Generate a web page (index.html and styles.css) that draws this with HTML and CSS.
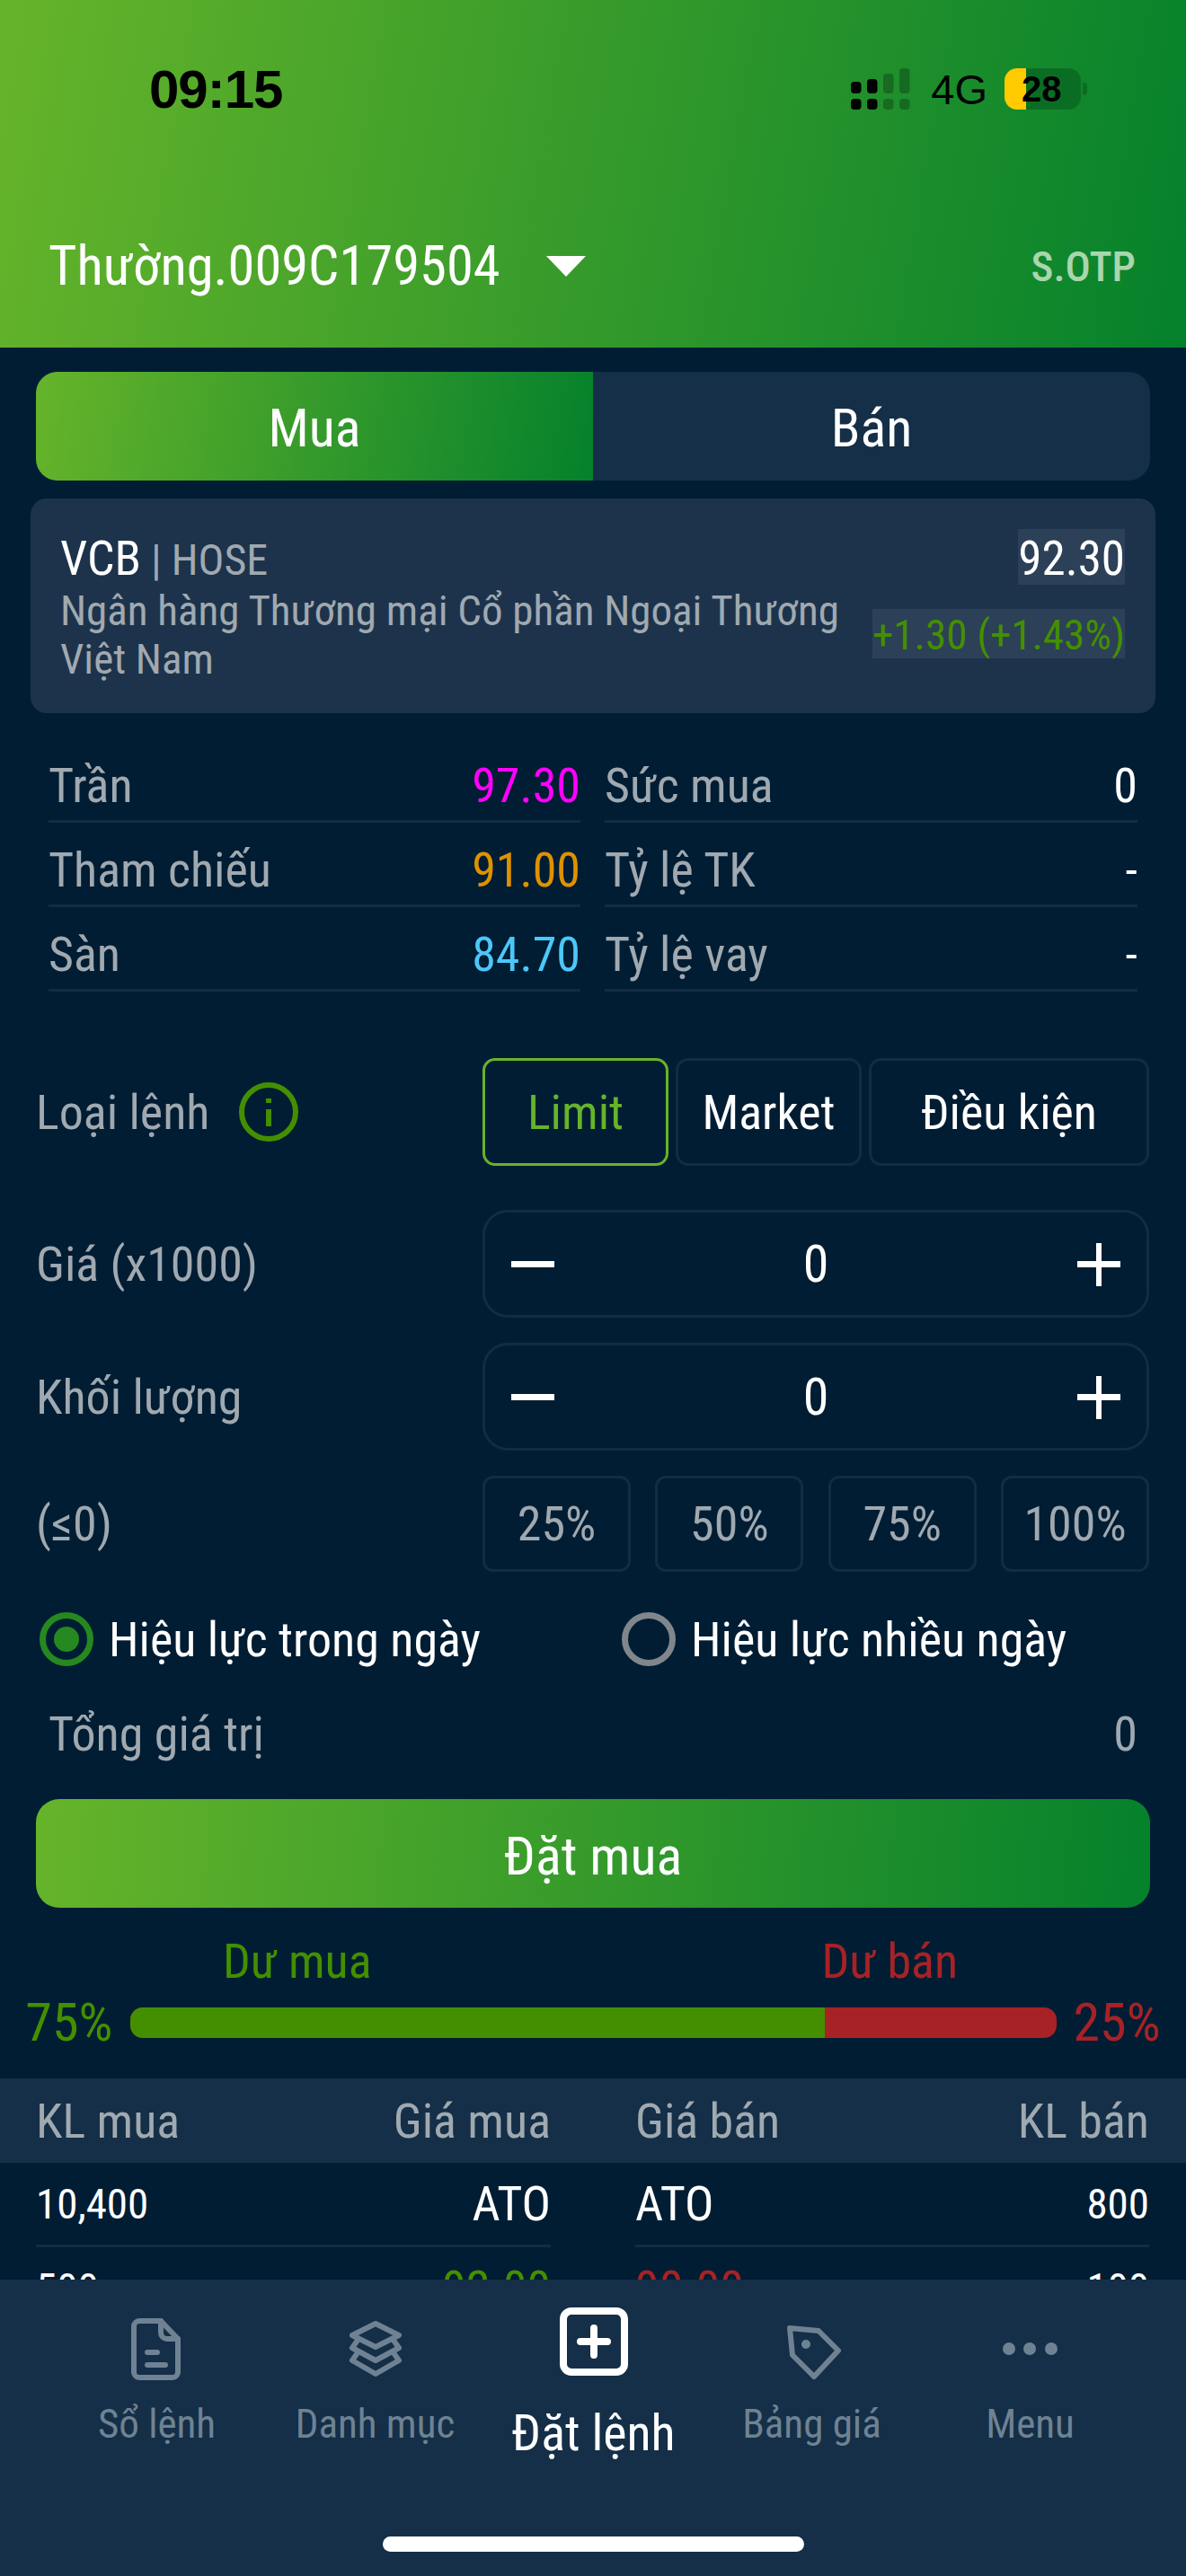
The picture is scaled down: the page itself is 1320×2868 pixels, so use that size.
FILE: index.html
```html
<!DOCTYPE html>
<html lang="vi">
  <head>
    <meta charset="UTF-8" />
    <meta name="viewport" content="width=device-width, initial-scale=1.0" />
    <title>Đặt lệnh</title>
    <link rel="stylesheet" href="styles.css">
  </head>
  <body>
    <header class="top">
      <div class="status">
        <span class="time">09:15</span>
        <div class="status-right">
          <svg class="signal" width="66" height="46" viewBox="0 0 66 46">
            <rect x="0" y="15" width="11.5" height="13" rx="4" />
            <rect x="18" y="12" width="11.5" height="16" rx="4" />
            <rect x="36" y="6" width="11.5" height="22" rx="4" opacity=".25" />
            <rect x="54" y="0" width="11.5" height="28" rx="4" opacity=".25" />
            <rect x="0" y="34" width="11.5" height="12" rx="4" />
            <rect x="18" y="34" width="11.5" height="12" rx="4" />
            <rect x="36" y="34" width="11.5" height="12" rx="4" opacity=".25" />
            <rect x="54" y="34" width="11.5" height="12" rx="4" opacity=".25" />
          </svg>
          <span class="net">4G</span>
          <div class="battery"><span class="battery-level"></span><span class="battery-num">28</span></div>
          <span class="battery-cap"></span>
        </div>
      </div>
      <div class="account">
        <span class="account-name">Thường.009C179504</span>
        <span class="caret"></span>
        <span class="otp">S.OTP</span>
      </div>
    </header>

    <main class="content">
      <div class="tabs">
        <div class="tab tab-on">Mua</div>
        <div class="tab">Bán</div>
      </div>

      <section class="stock">
        <div class="stock-left">
          <p class="stock-code"><b>VCB</b> | HOSE</p>
          <p class="stock-name">Ngân hàng Thương mại Cổ phần Ngoại Thương Việt Nam</p>
        </div>
        <div class="stock-right">
          <span class="stock-price">92.30</span>
          <span class="stock-change">+1.30 (+1.43%)</span>
        </div>
      </section>

      <section class="stats">
        <div class="stat"><span>Trần</span><span class="ceil">97.30</span></div>
        <div class="stat"><span>Sức mua</span><span class="white">0</span></div>
        <div class="stat"><span>Tham chiếu</span><span class="ref">91.00</span></div>
        <div class="stat"><span>Tỷ lệ TK</span><span class="white">-</span></div>
        <div class="stat"><span>Sàn</span><span class="floor">84.70</span></div>
        <div class="stat"><span>Tỷ lệ vay</span><span class="white">-</span></div>
      </section>

      <section class="form">
        <div class="form-row row-type">
          <div class="label">
            <span>Loại lệnh</span>
            <svg class="info" width="68" height="68" viewBox="0 0 68 68">
              <circle cx="34" cy="34" r="30" />
              <line x1="34" y1="31" x2="34" y2="50" />
              <line x1="34" y1="19" x2="34" y2="24" />
            </svg>
          </div>
          <div class="types">
            <div class="type type-on type-a">Limit</div>
            <div class="type type-a">Market</div>
            <div class="type type-b">Điều kiện</div>
          </div>
        </div>
        <div class="form-row row-input">
          <div class="label">Giá (x1000)</div>
          <div class="stepper"><span class="minus"></span><span>0</span><span class="plus"></span></div>
        </div>
        <div class="form-row row-tight">
          <div class="label">Khối lượng</div>
          <div class="stepper"><span class="minus"></span><span>0</span><span class="plus"></span></div>
        </div>
        <div class="form-row row-tight">
          <div class="label">(≤0)</div>
          <div class="percents">
            <div class="percent">25%</div>
            <div class="percent">50%</div>
            <div class="percent">75%</div>
            <div class="percent">100%</div>
          </div>
        </div>
      </section>

      <div class="radios">
        <div class="radio radio-on"><span class="dot"></span>Hiệu lực trong ngày</div>
        <div class="radio"><span class="dot"></span>Hiệu lực nhiều ngày</div>
      </div>

      <div class="total"><span>Tổng giá trị</span><span>0</span></div>

      <div class="submit">Đặt mua</div>

      <section class="balance">
        <div class="balance-labels"><span class="buy">Dư mua</span><span class="sell">Dư bán</span></div>
        <div class="balance-bar">
          <span class="buy">75%</span>
          <div class="bar"><div class="bar-buy" style="width: 75%"></div><div class="bar-sell"></div></div>
          <span class="sell">25%</span>
        </div>
      </section>

      <div class="book-head">
        <div class="book-side"><span>KL mua</span><span>Giá mua</span></div>
        <div class="book-side"><span>Giá bán</span><span>KL bán</span></div>
      </div>
      <div class="book-rows">
        <div class="book-side line"><span class="vol">10,400</span><span>ATO</span></div>
        <div class="book-side line"><span>ATO</span><span class="vol">800</span></div>
        <div class="book-side line"><span class="vol">500</span><span class="buy">92.00</span></div>
        <div class="book-side line"><span class="sell">90.00</span><span class="vol">100</span></div>
      </div>
    </main>

    <nav class="nav">
      <div class="nav-items">
        <div class="nav-item">
          <svg width="60" height="72" viewBox="0 0 60 72">
            <path d="M10 4H34L53 24V61a6 6 0 0 1-6 6H10a6 6 0 0 1-6-6V10a6 6 0 0 1 6-6z" />
            <path d="M34 4V17a7 7 0 0 0 7 7H53" />
            <path d="M19 39H30M19 53H39" />
          </svg>
          <span>Sổ lệnh</span>
        </div>
        <div class="nav-item">
          <svg width="68" height="72" viewBox="0 -2 68 72">
            <path d="M34 5L60 18L34 31L8 18Z" />
            <path d="M13 25L8 32L34 46L60 32L55 25" />
            <path d="M13 39L8 46L34 61L60 46L55 39" />
          </svg>
          <span>Danh mục</span>
        </div>
        <div class="nav-item nav-on">
          <svg width="80" height="80" viewBox="0 0 80 80">
            <rect x="6" y="6" width="68" height="68" rx="9" />
            <path d="M40 25V55M25 40H55" />
          </svg>
          <span>Đặt lệnh</span>
        </div>
        <div class="nav-item">
          <svg width="68" height="72" viewBox="-4 -5 68 72">
            <path d="M5 7L37 10L59 32L32 61L8 37Z" />
            <circle class="fill" cx="23" cy="25" r="5" />
          </svg>
          <span>Bảng giá</span>
        </div>
        <div class="nav-item">
          <svg width="64" height="72" viewBox="1 0 64 72">
            <circle class="fill" cx="9" cy="35" r="7" />
            <circle class="fill" cx="32" cy="35" r="7" />
            <circle class="fill" cx="56" cy="35" r="7" />
          </svg>
          <span>Menu</span>
        </div>
      </div>
      <div class="home"></div>
    </nav>
  </body>
</html>
```

FILE: styles.css
```css
* {
  margin: 0;
  padding: 0;
  box-sizing: border-box;
}

body {
  width: 1320px;
  height: 2868px;
  overflow: hidden;
  display: flex;
  flex-direction: column;
  background-color: #001d33;
  color: #a0a9b0;
  font-family: Roboto, "Noto Sans", sans-serif;
  font-stretch: 85%;
  font-size: 54px;
}

.top {
  height: 387px;
  flex: none;
  padding: 71px 56px 0 54px;
  background: linear-gradient(100deg, #66b42a, #05812c);
}

.status {
  display: flex;
  justify-content: space-between;
  align-items: center;
  height: 56px;
  padding-left: 112px;
  color: #000;
  font-family: "Liberation Sans", sans-serif;
  font-stretch: normal;
}

.time {
  font-size: 60px;
  font-weight: 700;
  letter-spacing: -1px;
}

.status-right {
  display: flex;
  align-items: center;
  margin-right: 54px;
}

.signal {
  fill: #000;
  margin-right: 23px;
}

.net {
  font-size: 47px;
  margin-right: 19px;
}

.battery {
  position: relative;
  width: 85px;
  height: 46px;
  border-radius: 14px;
  overflow: hidden;
  background-color: #0b6d24;
}

.battery-level {
  position: absolute;
  left: 0;
  top: 0;
  bottom: 0;
  width: 24px;
  background-color: #ffcb00;
}

.battery-num {
  position: absolute;
  left: 19px;
  top: 0;
  font-size: 40px;
  line-height: 46px;
  font-weight: 700;
}

.battery-cap {
  width: 5px;
  height: 14px;
  margin-left: 2px;
  border-radius: 0 4px 4px 0;
  background-color: #0b6d24;
}

.account {
  display: flex;
  align-items: center;
  margin-top: 131px;
  height: 76px;
  color: #fff;
}

.account-name {
  font-size: 60.5px;
}

.caret {
  margin-left: 51px;
  border-left: 22px solid transparent;
  border-right: 22px solid transparent;
  border-top: 23px solid #fff;
}

.otp {
  margin-left: auto;
  font-size: 47px;
  font-weight: 500;
  color: #a9d6ae;
}

.content {
  flex: 1;
  min-height: 0;
  overflow: hidden;
}

.tabs {
  display: flex;
  height: 121px;
  margin: 27px 40px 0;
  border-radius: 24px;
  overflow: hidden;
  background-color: #142f47;
  color: #fff;
  font-size: 60px;
}

.tab {
  flex: 1;
  display: flex;
  align-items: center;
  justify-content: center;
  padding-top: 3px;
}

.tab-on {
  background: linear-gradient(100deg, #66b42a, #05812c);
}

.stock {
  display: flex;
  justify-content: space-between;
  height: 239px;
  margin: 20px 34px 0;
  padding: 34px 34px 0 33px;
  border-radius: 18px;
  background-color: #1d334c;
}

.stock-left {
  width: 900px;
  font-size: 47px;
}

.stock-code {
  height: 62px;
  line-height: 66px;
  font-size: 48px;
}

.stock-code b {
  font-weight: 400;
  color: #fff;
  font-size: 54px;
}

.stock-name {
  margin-top: 2px;
  line-height: 54px;
}

.stock-right {
  display: flex;
  flex-direction: column;
  align-items: flex-end;
  gap: 27px;
}

.stock-price {
  height: 62px;
  line-height: 66px;
  font-size: 53px;
  background-color: #2c4058;
  color: #fff;
}

.stock-change {
  height: 55px;
  line-height: 57px;
  font-size: 47px;
  background-color: #2c4058;
  color: #438f00;
}

.stats {
  display: grid;
  grid-template-columns: 592px 593px;
  column-gap: 27px;
  margin: 28px 54px 0;
}

.stat {
  display: flex;
  justify-content: space-between;
  align-items: center;
  height: 94px;
  padding-top: 14px;
  border-bottom: 3px solid #132c43;
}

.white {
  color: #fff;
}

.ceil {
  color: #f0f;
}

.ref {
  color: #de9200;
}

.floor {
  color: #4cc7f9;
}

.form {
  margin: 74px 41px 0 40px;
}

.form-row {
  display: flex;
  align-items: center;
  justify-content: space-between;
}

.row-input {
  margin-top: 49px;
}

.row-tight {
  margin-top: 28px;
}

.label {
  display: flex;
  align-items: center;
  gap: 32px;
}

.info {
  fill: none;
  stroke: #438f00;
  stroke-width: 6;
}

.types {
  display: flex;
  gap: 8px;
  width: 742px;
  height: 120px;
  color: #fff;
}

.type {
  display: flex;
  align-items: center;
  justify-content: center;
  border: 3px solid #132c43;
  border-radius: 14px;
}

.type-a {
  width: 207px;
}

.type-b {
  flex: 1;
}

.type-on {
  border-color: #66b42a;
  color: #66b42a;
}

.stepper {
  display: flex;
  align-items: center;
  justify-content: space-between;
  width: 742px;
  height: 120px;
  padding: 0 29px;
  border: 3px solid #132c43;
  border-radius: 28px;
  color: #fff;
  font-size: 58px;
}

.minus,
.plus {
  position: relative;
  width: 48px;
  height: 7px;
  background-color: #fff;
}

.plus::after {
  content: "";
  position: absolute;
  left: 21px;
  top: -20px;
  width: 6px;
  height: 48px;
  background-color: #fff;
}

.percents {
  display: flex;
  justify-content: space-between;
  width: 742px;
}

.percent {
  display: flex;
  align-items: center;
  justify-content: center;
  width: 165px;
  height: 107px;
  border: 3px solid #132c43;
  border-radius: 12px;
}

.radios {
  display: flex;
  height: 60px;
  margin: 45px 0 0 44px;
  color: #fff;
}

.radio {
  flex: none;
  display: flex;
  align-items: center;
  gap: 17px;
  width: 648px;
}

.dot {
  flex: none;
  position: relative;
  width: 60px;
  height: 60px;
  border: 7px solid #80868b;
  border-radius: 50%;
}

.radio-on .dot {
  border-color: #25891f;
}

.radio-on .dot::after {
  content: "";
  position: absolute;
  left: 9px;
  top: 9px;
  width: 28px;
  height: 28px;
  border-radius: 50%;
  background-color: #25891f;
}

.total {
  display: flex;
  justify-content: space-between;
  align-items: center;
  height: 60px;
  margin: 45px 54px 0;
}

.submit {
  display: flex;
  align-items: center;
  justify-content: center;
  height: 121px;
  margin: 43px 40px 0;
  padding-top: 5px;
  border-radius: 26px;
  background: linear-gradient(95deg, #66b42a, #05812c);
  color: #fff;
  font-size: 60px;
}

.balance {
  margin-top: 28px;
}

.buy {
  color: #438f00;
}

.sell {
  color: #a72226;
}

.balance-labels {
  display: flex;
  height: 60px;
  padding-left: 248px;
  gap: 501px;
}

.balance-bar {
  display: flex;
  align-items: center;
  justify-content: center;
  gap: 19px;
  margin-top: 4px;
  font-size: 60px;
}

.bar {
  display: flex;
  width: 1031px;
  height: 34px;
  border-radius: 14px;
  overflow: hidden;
  background-color: #a72226;
}

.bar-buy {
  background-color: #438f00;
}

.book-head {
  display: grid;
  grid-template-columns: 573px 572px;
  column-gap: 94px;
  align-items: center;
  height: 94px;
  margin-top: 27px;
  padding: 0 40px;
  background-color: #142f47;
}

.book-side {
  display: flex;
  justify-content: space-between;
  align-items: center;
}

.book-rows {
  display: grid;
  grid-template-columns: 573px 572px;
  column-gap: 94px;
  padding: 0 40px;
  color: #fff;
}

.line {
  height: 94px;
  border-bottom: 3px solid #132c43;
}

.vol {
  font-size: 47px;
}

.nav {
  height: 330px;
  flex: none;
  display: flex;
  flex-direction: column;
  background-color: #142f47;
  color: #6f8293;
}

.nav-items {
  display: flex;
  padding: 42px 52px 0 53px;
}

.nav-item {
  flex: 1;
  display: flex;
  flex-direction: column;
  align-items: center;
  font-size: 45px;
}

.nav-item svg {
  flex: none;
  fill: none;
  stroke: #6f8293;
  stroke-width: 6;
  stroke-linejoin: round;
  stroke-linecap: round;
}

.nav-item svg .fill {
  fill: #6f8293;
  stroke: none;
}

.nav-item span {
  margin-top: 20px;
}

.nav-on {
  color: #fff;
  font-size: 56px;
}

.nav-on svg {
  margin-top: -13px;
  stroke: #fff;
  stroke-width: 8;
}

.nav-on span {
  margin-top: 29px;
}

.home {
  width: 469px;
  height: 17px;
  margin: auto auto 27px;
  border-radius: 9px;
  background-color: #fff;
}
```
